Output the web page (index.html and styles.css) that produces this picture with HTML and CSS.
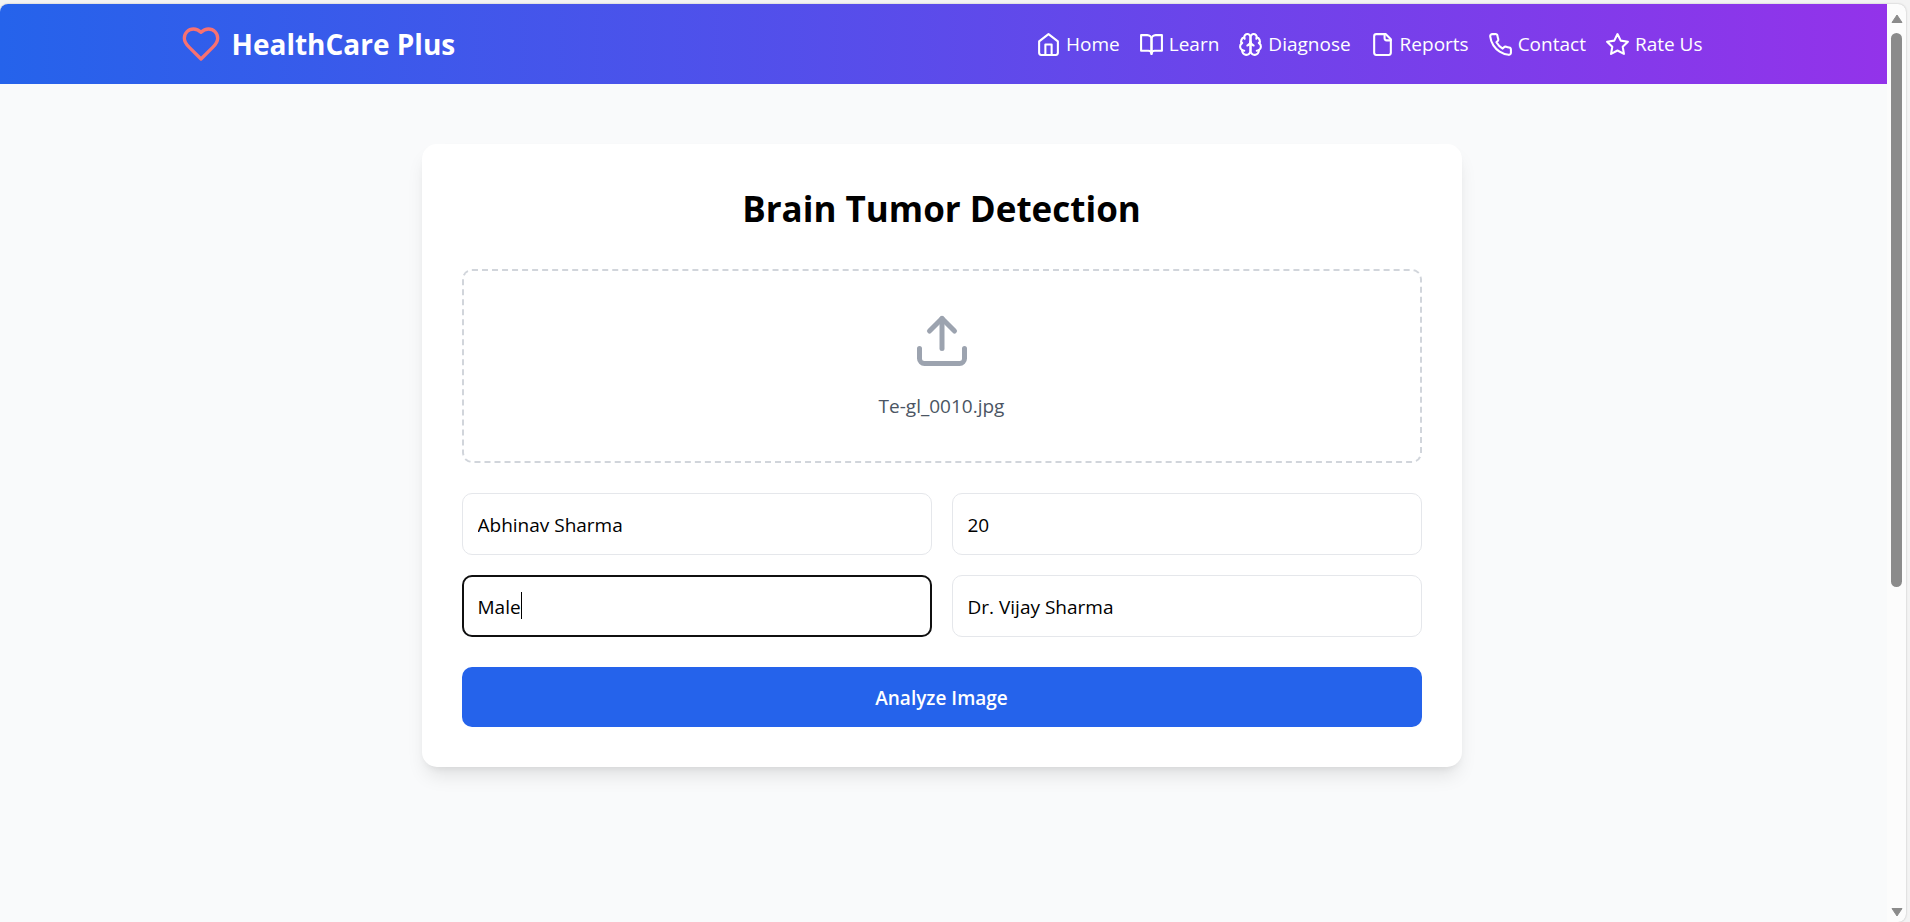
FILE: index.html
```html
<!DOCTYPE html>
<html lang="en">
<head>
<meta charset="utf-8">
<title>HealthCare Plus</title>
<link rel="stylesheet" href="styles.css">
</head>
<body>
<div class="window">
  <div class="page">
    <header class="header">
      <div class="header-inner">
        <a class="brand" href="#">
          <svg class="icon brand-icon" viewBox="0 0 24 24"><path d="M19 14c1.49-1.46 3-3.21 3-5.5A5.5 5.5 0 0 0 16.5 3c-1.76 0-3 .5-4.5 2-1.5-1.5-2.74-2-4.5-2A5.5 5.5 0 0 0 2 8.5c0 2.3 1.5 4.05 3 5.5l7 7Z"/></svg>
          <span>HealthCare Plus</span>
        </a>
        <nav class="nav">
          <a class="nav-link" href="#"><svg class="icon" viewBox="0 0 24 24"><path d="m3 9 9-7 9 7v11a2 2 0 0 1-2 2H5a2 2 0 0 1-2-2z"/><path d="M9 22V12h6v10"/></svg>Home</a>
          <a class="nav-link" href="#"><svg class="icon" viewBox="0 0 24 24"><path d="M2 3h6a4 4 0 0 1 4 4v14a3 3 0 0 0-3-3H2z"/><path d="M22 3h-6a4 4 0 0 0-4 4v14a3 3 0 0 1 3-3h7z"/></svg>Learn</a>
          <a class="nav-link" href="#"><svg class="icon" viewBox="0 0 24 24"><path d="M12 5a3 3 0 1 0-5.997.125 4 4 0 0 0-2.526 5.77 4 4 0 0 0 .556 6.588A4 4 0 1 0 12 18Z"/><path d="M12 5a3 3 0 1 1 5.997.125 4 4 0 0 1 2.526 5.77 4 4 0 0 1-.556 6.588A4 4 0 1 1 12 18Z"/><path d="M15 13a4.5 4.5 0 0 1-3-4 4.5 4.5 0 0 1-3 4"/><path d="M17.599 6.5a3 3 0 0 0 .399-1.375"/><path d="M6.003 5.125A3 3 0 0 0 6.401 6.5"/><path d="M3.477 10.896a4 4 0 0 1 .585-.396"/><path d="M19.938 10.5a4 4 0 0 1 .585.396"/><path d="M6 18a4 4 0 0 1-1.967-.516"/><path d="M19.967 17.484A4 4 0 0 1 18 18"/></svg>Diagnose</a>
          <a class="nav-link" href="#"><svg class="icon" viewBox="0 0 24 24"><path d="M15 2H6a2 2 0 0 0-2 2v16a2 2 0 0 0 2 2h12a2 2 0 0 0 2-2V7Z"/><path d="M14 2v4a2 2 0 0 0 2 2h4"/></svg>Reports</a>
          <a class="nav-link" href="#"><svg class="icon" viewBox="0 0 24 24"><path d="M22 16.92v3a2 2 0 0 1-2.18 2 19.79 19.79 0 0 1-8.63-3.07 19.5 19.5 0 0 1-6-6 19.79 19.79 0 0 1-3.07-8.67A2 2 0 0 1 4.11 2h3a2 2 0 0 1 2 1.72 12.84 12.84 0 0 0 .7 2.81 2 2 0 0 1-.45 2.11L8.09 9.91a16 16 0 0 0 6 6l1.27-1.27a2 2 0 0 1 2.11-.45 12.84 12.84 0 0 0 2.81.7A2 2 0 0 1 22 16.92z"/></svg>Contact</a>
          <a class="nav-link" href="#"><svg class="icon" viewBox="0 0 24 24"><polygon points="12 2 15.09 8.26 22 9.27 17 14.14 18.18 21.02 12 17.77 5.82 21.02 7 14.14 2 9.27 8.91 8.26 12 2"/></svg>Rate Us</a>
        </nav>
      </div>
    </header>
    <main class="main">
      <form class="card" onsubmit="return false">
        <h1 class="title">Brain Tumor Detection</h1>
        <label class="upload">
          <input class="upload-input" type="file" accept="image/*">
          <svg class="icon upload-icon" viewBox="0 0 24 24"><path d="M21 15v4a2 2 0 0 1-2 2H5a2 2 0 0 1-2-2v-4"/><path d="m17 8-5-5-5 5"/><path d="M12 3v12"/></svg>
          <span class="upload-name">Te-gl_0010.jpg</span>
        </label>
        <div class="fields">
          <input class="field" type="text" aria-label="Patient name" value="Abhinav Sharma">
          <input class="field" type="text" aria-label="Age" value="20">
          <div class="field-active">
            <input class="field" type="text" id="gender" aria-label="Gender" value="Male">
            <span class="caret" aria-hidden="true"></span>
          </div>
          <input class="field" type="text" aria-label="Doctor name" value="Dr. Vijay Sharma">
        </div>
        <button class="submit" type="submit">Analyze Image</button>
      </form>
    </main>
  </div>
  <div class="scrollbar" aria-hidden="true">
    <svg class="arrow" viewBox="0 0 12 10"><path d="M6 1 11 8.500H1Z"/></svg>
    <div class="track"><div class="thumb"></div></div>
    <svg class="arrow" viewBox="0 0 12 10"><path d="M6 9 1 1.500H11Z"/></svg>
  </div>
</div>
<script src="script.js"></script>
</body>
</html>
```
FILE: styles.css
```css
* { box-sizing: border-box; }

body {
  margin: 0;
  height: 100vh;
  padding: 4px 4px 0 0;
  background: #f3f3f3;
  color: #000;
  font-family: "Segoe UI", "Open Sans", "Noto Sans", sans-serif;
  font-size: 19px;
  line-height: 30px;
}

.window {
  display: flex;
  height: 100%;
  overflow: hidden;
  border-radius: 8px;
  border-bottom-left-radius: 0;
  background: #fcfcfc;
  box-shadow: 0 0 2px rgba(0, 0, 0, 0.25);
}

.page {
  flex: 1;
  min-width: 0;
  background: #f9fafb;
}

.icon {
  width: 25px;
  height: 25px;
  flex: none;
  fill: none;
  stroke: currentColor;
  stroke-width: 2;
  stroke-linecap: round;
  stroke-linejoin: round;
}

.header {
  padding: 0 44px 0 40px;
  background: linear-gradient(to right, #2563eb, #9333ea);
  color: #fff;
}

.header-inner {
  display: flex;
  align-items: center;
  justify-content: space-between;
  max-width: 1522px;
  height: 80px;
  margin: 0 auto;
}

.brand {
  display: flex;
  align-items: center;
  gap: 11px;
  color: inherit;
  font-size: 28px;
  font-weight: 700;
  line-height: 40px;
  text-decoration: none;
}

.brand-icon {
  width: 40px;
  height: 40px;
  color: #f87171;
}

.nav {
  display: flex;
  gap: 19px;
}

.nav-link {
  display: flex;
  align-items: center;
  gap: 5px;
  color: inherit;
  text-decoration: none;
}

.main {
  padding: 60px 24px 60px 20px;
}

.card {
  max-width: 1040px;
  margin: 0 auto;
  padding: 40px;
  border-radius: 15px;
  background: #fff;
  box-shadow: 0 12px 19px -4px rgba(0, 0, 0, 0.1), 0 5px 8px -5px rgba(0, 0, 0, 0.1);
}

.title {
  margin: 0 0 35px;
  font-size: 35px;
  font-weight: 700;
  line-height: 50px;
  text-align: center;
}

.upload {
  display: flex;
  flex-direction: column;
  align-items: center;
  gap: 20px;
  padding: 40px;
  border: 2px dashed #d1d5db;
  border-radius: 10px;
  cursor: pointer;
}

.upload-input { display: none; }

.upload-icon {
  width: 60px;
  height: 60px;
  color: #9ca3af;
}

.upload-name { color: #4b5563; }

.fields {
  display: grid;
  grid-template-columns: 1fr 1fr;
  gap: 20px;
  margin: 30px 0;
}

.field {
  display: block;
  width: 100%;
  height: 62px;
  padding: 16px 15px 14px;
  border: 1px solid #e5e7eb;
  border-radius: 10px;
  background: #fff;
  color: #000;
  font: inherit;
}

.field:focus {
  outline: 2px solid #101010;
  outline-offset: -2px;
}

.field-active { position: relative; }

.field-active .field { caret-color: transparent; }

.caret {
  position: absolute;
  top: 17px;
  left: 59px;
  width: 1px;
  height: 27px;
  background: #000;
}

.submit {
  display: block;
  width: 100%;
  padding: 16px 15px 14px;
  border: 0;
  border-radius: 10px;
  background: #2563eb;
  color: #fff;
  font: inherit;
  font-weight: 600;
}

.scrollbar {
  display: flex;
  flex-direction: column;
  align-items: center;
  gap: 9px;
  width: 19px;
  padding: 10px 0 5px;
}

.arrow {
  width: 12px;
  height: 10px;
  fill: #8b8b8b;
  stroke: #8b8b8b;
  stroke-linejoin: round;
}

.track {
  flex: 1;
  width: 11px;
}

.thumb {
  height: 64%;
  border-radius: 6px;
  background: #8b8b8b;
}
```
FILE: script.js
```js
const gender = document.getElementById("gender");
gender.focus();
gender.setSelectionRange(gender.value.length, gender.value.length);
```
